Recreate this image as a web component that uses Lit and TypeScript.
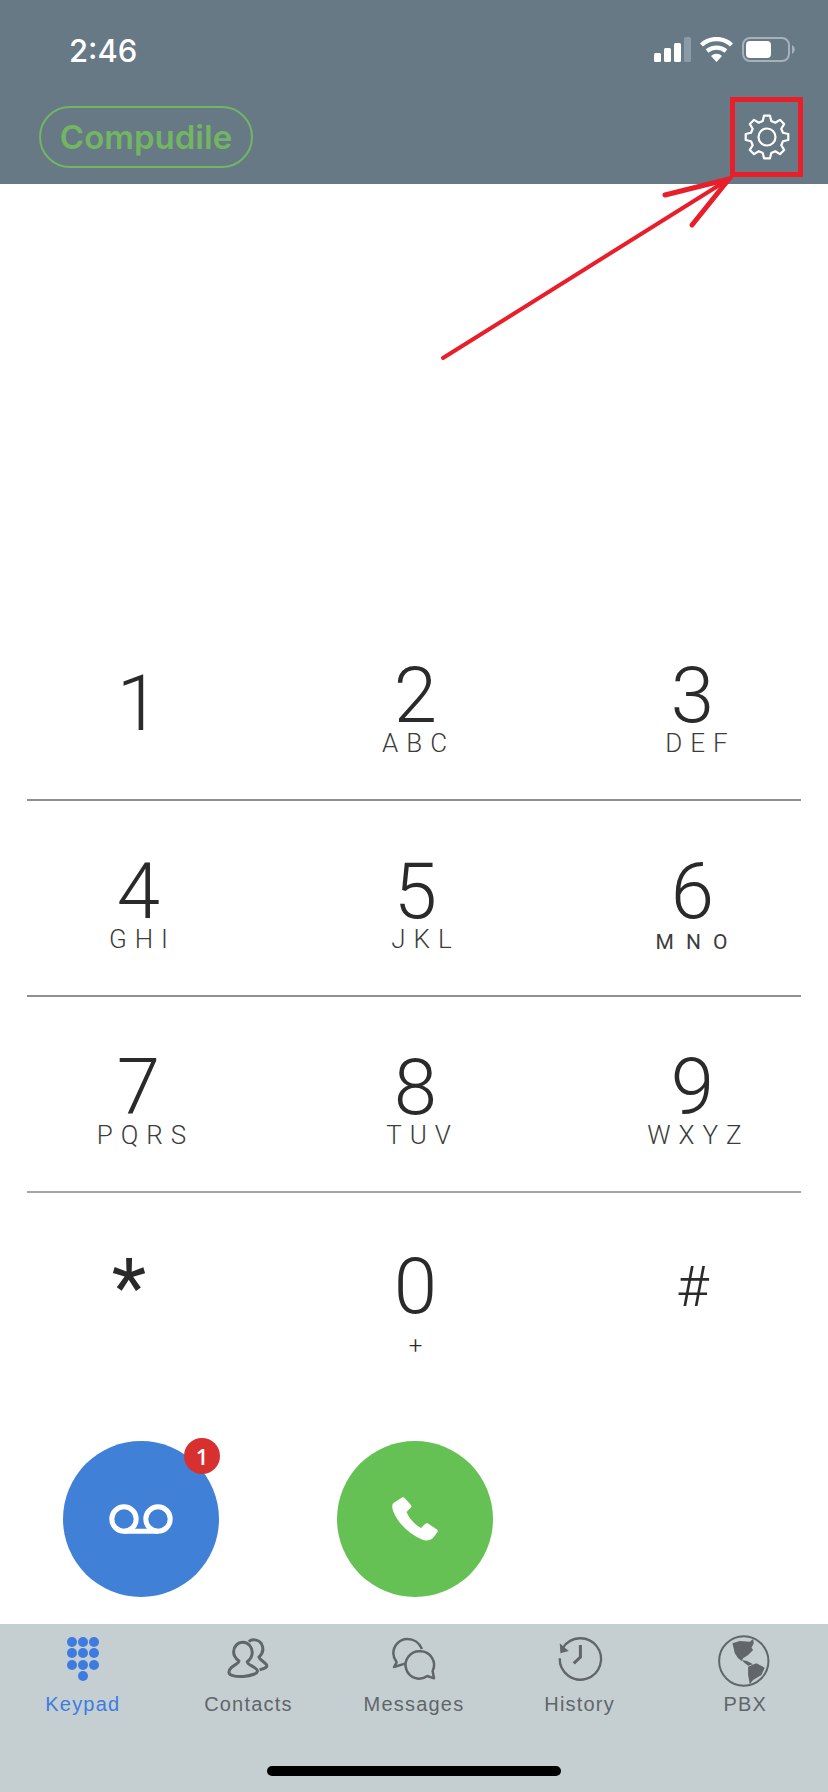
import { LitElement, html, css, svg } from 'lit';
import { customElement } from 'lit/decorators.js';

interface Key {
    digit: string;
    letters?: string;
    // the letters are not quite centred under the digits in the reference
    shift?: number;
    cls?: string;
}

const rows: Key[][] = [
    [{ digit: '1', cls: 'one' }, { digit: '2', letters: 'ABC', shift: -1 }, { digit: '3', letters: 'DEF', shift: 4 }],
    [{ digit: '4', letters: 'GHI' }, { digit: '5', letters: 'JKL', shift: 6 }, { digit: '6', letters: 'MNO', shift: -1, cls: 'small' }],
    [{ digit: '7', letters: 'PQRS', shift: 3 }, { digit: '8', letters: 'TUV', shift: 3 }, { digit: '9', letters: 'WXYZ', shift: 2 }],
];

// 8 toothed gear outline, from polar points
function gearPath(): string {
    const pts: string[] = [];
    for (let i = 0; i < 8; i++) {
        const a = i * 45 - 90;
        for (const [off, r] of [[-15, 16.5], [-8, 21.5], [8, 21.5], [15, 16.5]]) {
            const t = ((a + off) * Math.PI) / 180;
            pts.push(`${(r * Math.cos(t)).toFixed(2)} ${(r * Math.sin(t)).toFixed(2)}`);
        }
    }
    return `M${pts.join(' L')} Z`;
}

@customElement('app-root')
export class AppRoot extends LitElement {

    static styles = css`
        :host {
            display: block;
            position: relative;
            width: 828px;
            height: 1792px;
            background: #fff;
            overflow: hidden;
            font-family: Roboto, "Liberation Sans", sans-serif;
        }

        .page {
            display: flex;
            flex-direction: column;
            height: 100%;
        }

        .top {
            height: 184px;
            flex: none;
            background: #667985;
            box-sizing: border-box;
            padding: 34px 25px 0 39px;
            display: flex;
            flex-direction: column;
        }

        .status {
            display: flex;
            justify-content: space-between;
            align-items: center;
            height: 32px;
            padding-right: 7px;
        }

        .time {
            color: #fff;
            font-family: Inter, "Liberation Sans", sans-serif;
            font-size: 31px;
            font-weight: 500;
            margin-left: 30px;
        }

        .nav {
            display: flex;
            justify-content: space-between;
            align-items: center;
            margin-top: 31px;
            height: 80px;
        }

        .brand {
            box-sizing: border-box;
            width: 214px;
            height: 62px;
            border: 2px solid #72b563;
            border-radius: 31px;
            color: #72b563;
            font-family: Inter, "Liberation Sans", sans-serif;
            font-size: 33px;
            font-weight: 600;
            display: flex;
            align-items: center;
            justify-content: center;
        }

        .settings {
            box-sizing: border-box;
            width: 73px;
            height: 80px;
            border: 5px solid #e81e2a;
            display: flex;
            align-items: center;
            justify-content: center;
        }

        .pad {
            flex: none;
            margin-top: 421px;
        }

        .row {
            display: grid;
            grid-template-columns: repeat(3, 277px);
            height: 196px;
            box-sizing: border-box;
        }

        .rule {
            height: 2px;
            margin: -2px 27px 0;
            background: #909090;
        }

        .rule.thick {
            background: #a4a4a4;
        }

        .key {
            display: flex;
            flex-direction: column;
            align-items: center;
            padding-top: 57px;
            color: #2a2a2a;
        }

        .digit {
            font-size: 78px;
            font-weight: 300;
            line-height: 68px;
        }

        .letters {
            font-size: 26px;
            font-weight: 300;
            letter-spacing: 8px;
            line-height: 26px;
            color: #3c3c3c;
        }

        .small .letters {
            font-size: 21px;
            font-weight: 400;
            letter-spacing: 12px;
            margin-top: 3px;
        }

        .one {
            padding-top: 65px;
        }

        .last {
            height: 190px;
        }

        .zero {
            padding-top: 60px;
        }

        .star {
            font-size: 80px;
            line-height: 84px;
            font-weight: 400;
            padding-top: 53px;
            margin-left: -19px;
        }

        .hash {
            font-size: 56px;
            line-height: 60px;
            font-weight: 300;
            padding-top: 64px;
        }

        .plus {
            font-size: 24px;
            line-height: 24px;
            margin-top: 13px;
            font-weight: 300;
        }

        .actions {
            display: flex;
            gap: 118px;
            padding-left: 63px;
            margin-top: 58px;
        }

        .round {
            position: relative;
            width: 156px;
            height: 156px;
            border-radius: 50%;
            display: flex;
            align-items: center;
            justify-content: center;
        }

        .mail {
            background: #4180d7;
        }

        .call {
            background: #65c154;
        }

        .badge {
            position: absolute;
            top: -3px;
            right: -1px;
            width: 36px;
            height: 36px;
            border-radius: 50%;
            background: #d8302f;
            color: #fff;
            font-family: "Open Sans", sans-serif;
            font-size: 22px;
            font-weight: 600;
            display: flex;
            align-items: center;
            justify-content: center;
        }

        .tabs {
            margin-top: auto;
            height: 168px;
            flex: none;
            background: #c5cfd2;
            display: flex;
            flex-direction: column;
        }

        .tab-row {
            display: grid;
            grid-template-columns: repeat(5, 1fr);
        }

        .tab {
            display: flex;
            flex-direction: column;
            align-items: center;
            color: #606669;
            font-family: "Liberation Sans", Arial, sans-serif;
            font-size: 20px;
            letter-spacing: 1.2px;
        }

        .tab.active {
            color: #3d7be0;
        }

        .tab svg {
            display: block;
            height: 68px;
            width: 80px;
        }

        .tab span {
            line-height: 24px;
        }

        .home {
            width: 294px;
            height: 10px;
            border-radius: 5px;
            background: #000;
            margin: 50px auto 0;
        }

        .arrow {
            position: absolute;
            left: 0;
            top: 0;
            pointer-events: none;
        }
    `;

    private renderKey(k: Key) {
        // margin moves a centred box by half its size, and makes up for the trailing letter-spacing
        const sp = k.cls === 'small' ? 12 : 8;
        return html`<div class="key ${k.cls ?? ''}">
            <div class="digit">${k.digit}</div>
            ${k.letters
                ? html`<div class="letters" style="margin-left:${sp + 2 * (k.shift ?? 0)}px">${k.letters}</div>`
                : ''}
        </div>`;
    }

    private statusIcons() {
        return html`<svg width="142" height="26" viewBox="0 0 142 26">
            <rect x="0" y="16" width="7" height="9" rx="1.5" fill="#fff"/>
            <rect x="10" y="11" width="7" height="14" rx="1.5" fill="#fff"/>
            <rect x="20" y="6" width="7" height="19" rx="1.5" fill="#fff"/>
            <rect x="30" y="0" width="7" height="25" rx="1.5" fill="#8b9aa4"/>
            <path d="M47.5 8 A22 22 0 0 1 77.5 8" fill="none" stroke="#fff" stroke-width="4.4"/>
            <path d="M53 14 A15 15 0 0 1 72 14" fill="none" stroke="#fff" stroke-width="4.4"/>
            <path d="M57 19 L62.5 25 L68 19 A8 8 0 0 0 57 19 Z" fill="#fff"/>
            <rect x="89" y="1" width="46" height="23" rx="7" fill="none" stroke="#a6b1b9" stroke-width="2"/>
            <rect x="92" y="4" width="25" height="17" rx="4" fill="#fff"/>
            <path d="M138 8 A5 5 0 0 1 138 17 Z" fill="#a6b1b9"/>
        </svg>`;
    }

    render() {
        return html`<div class="page">
            <div class="top">
                <div class="status">
                    <span class="time">2:46</span>
                    ${this.statusIcons()}
                </div>
                <div class="nav">
                    <div class="brand">Compudile</div>
                    <div class="settings">
                        <svg width="50" height="50" viewBox="-25 -25 50 50" fill="none" stroke="#fff" stroke-width="2.2" stroke-linejoin="round">
                            <path d=${gearPath()}/>
                            <circle r="8.5"/>
                        </svg>
                    </div>
                </div>
            </div>
            <div class="pad">
                ${rows.map((r, i) => html`
                    <div class="row">${r.map(k => this.renderKey(k))}</div>
                    <div class="rule ${i === 2 ? 'thick' : ''}"></div>
                `)}
                <div class="row last">
                    <div class="key star">*</div>
                    <div class="key zero">
                        <div class="digit">0</div>
                        <div class="plus">+</div>
                    </div>
                    <div class="key hash">#</div>
                </div>
            </div>
            <div class="actions">
                <div class="round mail">
                    <svg width="64" height="30" viewBox="0 0 64 30">
                        <circle cx="15" cy="15" r="12.2" fill="none" stroke="#fff" stroke-width="5"/>
                        <circle cx="49" cy="15" r="12.2" fill="none" stroke="#fff" stroke-width="5"/>
                        <path d="M15 27.2 H49" stroke="#fff" stroke-width="5"/>
                    </svg>
                    <div class="badge">1</div>
                </div>
                <div class="round call">
                    <svg width="46" height="44" viewBox="0 0 46 44">
                        <path d="M10 0.5 L1.5 6 C-0.5 8 0 12 2 16 C7 27 17 37 31 43 C35 44 39 43 41 41 L45.5 35 C46 34 45.5 33 45 32.5 L36 26.5 C35 26 34 26 33 27 L29 31 C23 28 17 21 14.5 15 L19 10.5 C19.5 10 19.5 9 19 8 L12.5 1 C12 0 11 0 10 0.5 Z" fill="#fff"/>
                    </svg>
                </div>
            </div>
            <div class="tabs">
                <div class="tab-row">
                    <div class="tab active">
                        <svg viewBox="0 0 80 68" fill="#3d7be0">
                            ${[18, 29, 41].map(y => [29, 40, 51].map(x => svg`<circle cx=${x} cy=${y} r="5"/>`))}
                            <circle cx="40" cy="52" r="5"/>
                        </svg>
                        <span>Keypad</span>
                    </div>
                    <div class="tab">
                        <svg viewBox="0 0 80 68" fill="none" stroke="#606669">
                            <g transform="translate(1.6 1) scale(.3333)" stroke-width="9">
                                <path d="M100 52 C118 52 128 68 128 82 C128 95 120 105 113 110 C113 118 128 122 138 130 C146 136 146 142 135 147 C115 155 85 157 70 152 C55 148 55 138 65 128 C75 118 88 115 88 108 C78 100 72 92 72 80 C72 65 84 52 100 52 Z"/>
                                <path d="M118 50 C125 42 145 42 155 55 C163 70 160 85 148 96 C150 105 162 108 170 118 C175 126 168 130 150 134"/>
                            </g>
                        </svg>
                        <span>Contacts</span>
                    </div>
                    <div class="tab">
                        <svg viewBox="0 0 80 68" fill="none" stroke="#606669">
                            <g transform="translate(-164 1) scale(.3333)" stroke-width="7.5" stroke-linejoin="round">
                                <path d="M636 72 C628 52 610 42 592 42 C568 42 550 62 550 85 C550 97 555 105 560 112 L552 126 L585 116"/>
                                <path d="M630 79 A41 41 0 0 1 668 138 L672 160 L652 153 A41 41 0 1 1 630 79 Z"/>
                            </g>
                        </svg>
                        <span>Messages</span>
                    </div>
                    <div class="tab">
                        <svg viewBox="0 0 80 68" fill="none" stroke="#606669">
                            <g transform="translate(.4 1) scale(.3333)" stroke-width="7">
                                <path d="M68 68 A62 62 0 1 1 58 100"/>
                                <path d="M58 55 L60 85 L85 78 Z" fill="#606669" stroke="none"/>
                                <path d="M120 60 V96 L100 115" stroke-width="9"/>
                            </g>
                        </svg>
                        <span>History</span>
                    </div>
                    <div class="tab">
                        <svg viewBox="0 0 80 68" fill="#606669">
                            <g transform="translate(-165.2 1) scale(.3333)">
                                <circle cx="612" cy="108" r="74" fill="none" stroke="#606669" stroke-width="6"/>
                                <path d="M578 55 L600 48 L630 50 L640 42 L642 55 L635 68 L640 75 L625 90 L610 100 L606 108 L595 100 L585 85 Z"/>
                                <path d="M606 105 L622 108 L640 118 L625 122 L612 112 Z"/>
                                <path d="M625 125 L650 115 L675 128 L665 150 L640 165 L630 178 L625 150 Z"/>
                            </g>
                        </svg>
                        <span>PBX</span>
                    </div>
                </div>
                <div class="home"></div>
            </div>
            <svg class="arrow" width="828" height="400" viewBox="0 0 828 400" fill="none" stroke="#e81e2a" stroke-linecap="round">
                <path d="M443 358 L729 179" stroke-width="4"/>
                <path d="M665 195 L729 179 L692 225" stroke-width="5"/>
            </svg>
        </div>`;
    }
}
